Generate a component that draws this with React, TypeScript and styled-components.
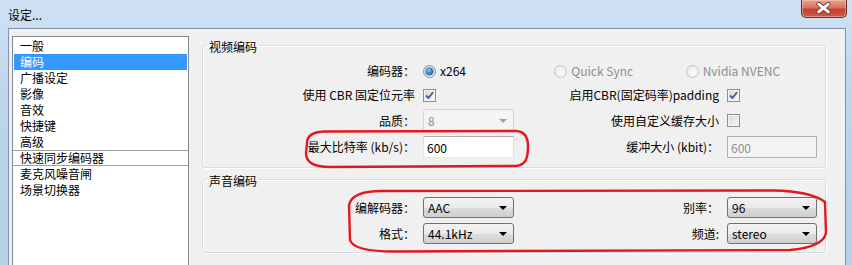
import styled, { createGlobalStyle } from 'styled-components';

const GlobalStyle = createGlobalStyle`
  html, body {
    margin: 0;
    padding: 0;
    width: 852px;
    height: 265px;
    overflow: hidden;
  }
  body {
    font-family: "Liberation Sans Narrow", "Noto Sans CJK SC", "Liberation Sans", sans-serif;
    font-size: 12px;
    color: #000;
  }
`;

const menuItems = [
  '一般',
  '编码',
  '广播设定',
  '影像',
  '音效',
  '快捷键',
  '高级',
  '快速同步编码器',
  '麦克风噪音闸',
  '场景切换器',
];

function Check() {
  return (
    <svg width="9" height="9" viewBox="0 0 9 9">
      <path d="M1 4.5 L3.5 7 L8 1.2" fill="none" stroke="#3f5a9c" strokeWidth="1.8" />
    </svg>
  );
}

function App() {
  return (
    <Window>
      <GlobalStyle />
      <TitleBar>
        <Title>设定...</Title>
        <CloseButton>
          <svg width="46" height="18" viewBox="0 0 46 18">
            <path d="M18 5 L28 13 M28 5 L18 13" stroke="#6b3a32" strokeWidth="4.6" strokeLinecap="round" />
            <path d="M18 5 L28 13 M28 5 L18 13" stroke="#fff" strokeWidth="2.8" strokeLinecap="round" />
          </svg>
        </CloseButton>
      </TitleBar>

      <Client>
        <MenuList>
          {menuItems.map((item, i) => (
            <MenuItem key={item} $selected={i === 1} $divided={i === 7}>
              {item}
            </MenuItem>
          ))}
        </MenuList>

        <Content>
          <GroupBox>
            <Legend>视频编码</Legend>
            <FormGrid $top={7} $rows="20px 20px 23px 22px" $gap={4}>
              <Label>编码器：</Label>
              <RadioGroup>
                <RadioOption>
                  <Radio $checked />
                  x264
                </RadioOption>
                <RadioOption $disabled>
                  <Radio $disabled />
                  Quick Sync
                </RadioOption>
                <RadioOption $disabled>
                  <Radio $disabled />
                  Nvidia NVENC
                </RadioOption>
              </RadioGroup>

              <Label>使用 CBR 固定位元率</Label>
              <Checkbox>
                <Check />
              </Checkbox>
              <Label>启用CBR(固定码率)padding</Label>
              <Checkbox>
                <Check />
              </Checkbox>

              <Label>品质：</Label>
              <Combo $disabled>
                8
                <Arrow $disabled />
              </Combo>
              <Label>使用自定义缓存大小</Label>
              <Checkbox />

              <Label>最大比特率 (kb/s)：</Label>
              <TextBox defaultValue="600" />
              <Label>缓冲大小 (kbit)：</Label>
              <TextBox defaultValue="600" disabled />
            </FormGrid>
          </GroupBox>

          <GroupBox>
            <Legend>声音编码</Legend>
            <FormGrid $top={9} $rows="21px 21px" $gap={5}>
              <Label>编解码器：</Label>
              <Combo>
                AAC
                <Arrow />
              </Combo>
              <Label>别率：</Label>
              <Combo>
                96
                <Arrow />
              </Combo>

              <Label>格式：</Label>
              <Combo>
                44.1kHz
                <Arrow />
              </Combo>
              <Label>频道:</Label>
              <Combo>
                stereo
                <Arrow />
              </Combo>
            </FormGrid>
          </GroupBox>
        </Content>
      </Client>

      <Annotation $left={300} $top={126} width="232" height="46" viewBox="0 0 232 46">
        <path d="M7 17 C7 9, 13 6, 24 5.5 L216 5 C225 5.5, 228 11, 228 20 C228 32, 226 39, 216 40 L30 41 C13 41, 6 36, 6 27 Z" />
      </Annotation>
      <Annotation $left={340} $top={185} width="492" height="73" viewBox="0 0 492 73">
        <path d="M9 20 C11 11, 22 6, 42 6 L433 5.5 C460 6, 476 10, 485 17 L486 48 C484 58, 472 63, 450 65 L55 66.5 C25 66.5, 12 62, 10 55 Z" />
      </Annotation>
    </Window>
  );
}

const Window = styled.div`
  position: relative;
  width: 852px;
  height: 265px;
  display: flex;
  flex-direction: column;
  background: linear-gradient(to bottom, #cfe1f4 0%, #bdd4ed 40%, #b7cfe9 100%);
  overflow: hidden;
`;

const TitleBar = styled.div`
  height: 28px;
  flex-shrink: 0;
  display: flex;
  align-items: flex-start;
  padding-left: 8px;
`;

const Title = styled.span`
  margin-top: 8px;
  line-height: 14px;
  font-size: 12px;
  color: #000;
`;

const CloseButton = styled.div`
  margin-left: auto;
  margin-right: 5px;
  width: 46px;
  height: 18px;
  box-sizing: border-box;
  border: 1px solid #6a2e26;
  border-top: none;
  border-radius: 0 0 5px 5px;
  background: linear-gradient(to bottom, #e8a595 0%, #d9735f 45%, #c2412d 55%, #cf5b45 100%);
  box-shadow: inset 0 0 0 1px rgba(255, 210, 200, 0.45);
  display: flex;
  svg {
    display: block;
    margin: -1px 0 0 -1px;
  }
`;

const Client = styled.div`
  flex: 1;
  min-height: 0;
  display: flex;
  align-items: flex-start;
  gap: 13px;
  margin: 0 6px 0 8px;
  padding: 7px 0 0 3px;
  background: #f0f0f0;
  border: 1px solid #7f92a8;
  border-bottom: none;
`;

const MenuList = styled.div`
  width: 177px;
  height: 260px;
  flex-shrink: 0;
  box-sizing: border-box;
  border: 1px solid #828790;
  background: #fff;
  padding: 1px 0;
`;

const MenuItem = styled.div<{ $selected?: boolean; $divided?: boolean }>`
  height: 16px;
  box-sizing: border-box;
  line-height: ${(p) => (p.$divided ? '14px' : '16px')};
  margin: ${(p) => (p.$divided ? '0' : '0 1px')};
  padding-left: ${(p) => (p.$divided ? '7px' : '6px')};
  white-space: nowrap;
  background: ${(p) => (p.$selected ? '#3399ff' : 'transparent')};
  color: ${(p) => (p.$selected ? '#fff' : '#000')};
  border-top: ${(p) => (p.$divided ? '1px solid #a0a0a0' : 'none')};
  border-bottom: ${(p) => (p.$divided ? '1px solid #a0a0a0' : 'none')};
`;

const Content = styled.div`
  width: 624px;
  display: flex;
  flex-direction: column;
  gap: 2px;
`;

const GroupBox = styled.fieldset`
  margin: 0;
  padding: 0 8px 9px 0;
  min-width: 0;
  border: 1px solid #d5dfe5;
  border-radius: 3px;
  box-shadow: inset 1px 1px 0 #fff, 1px 1px 0 #fff;
  & + & {
    padding-bottom: 8px;
  }
`;

const Legend = styled.legend`
  margin-left: 4px;
  padding: 4px 2px 0;
  line-height: 14px;
  font-size: 12px;
  color: #000;
`;

const FormGrid = styled.div<{ $top: number; $rows: string; $gap: number }>`
  display: grid;
  grid-template-columns: 212px 91px 1fr 90px;
  grid-template-rows: ${(p) => p.$rows};
  column-gap: 8px;
  row-gap: ${(p) => p.$gap}px;
  margin-top: ${(p) => p.$top}px;
  align-items: center;
`;

const Label = styled.span`
  justify-self: end;
  white-space: nowrap;
  line-height: 16px;
`;

const RadioGroup = styled.div`
  grid-column: 2 / 5;
  display: flex;
  align-items: center;
`;

const RadioOption = styled.span<{ $disabled?: boolean }>`
  width: 132px;
  display: inline-flex;
  align-items: center;
  gap: 4px;
  line-height: 16px;
  color: ${(p) => (p.$disabled ? '#8e8e8e' : '#000')};
`;

const Radio = styled.span<{ $checked?: boolean; $disabled?: boolean }>`
  position: relative;
  width: 13px;
  height: 13px;
  box-sizing: border-box;
  border-radius: 50%;
  border: 1px solid ${(p) => (p.$disabled ? '#c4c4c4' : '#8f8f8f')};
  background: ${(p) =>
    p.$disabled
      ? 'radial-gradient(circle at 60% 60%, #fafafa, #e6e6e6)'
      : 'radial-gradient(circle at 60% 60%, #ffffff, #d2d6db)'};
  &::after {
    content: '';
    display: ${(p) => (p.$checked ? 'block' : 'none')};
    position: absolute;
    left: 2px;
    top: 2px;
    width: 7px;
    height: 7px;
    border-radius: 50%;
    background: radial-gradient(circle at 40% 35%, #8fd0f5 0%, #2c8ad0 45%, #1c4f86 100%);
    box-shadow: 0 0 0 0.5px #24456b;
  }
`;

const Checkbox = styled.span`
  justify-self: start;
  width: 13px;
  height: 13px;
  box-sizing: border-box;
  border: 1px solid #8e8f8f;
  background: linear-gradient(135deg, #d3d7dc 0%, #f7f7f7 100%);
  box-shadow: inset 0 0 0 1px #f4f4f4;
  display: flex;
  align-items: center;
  justify-content: center;
  svg {
    display: block;
  }
`;

const Combo = styled.div<{ $disabled?: boolean }>`
  height: 100%;
  box-sizing: border-box;
  display: flex;
  align-items: center;
  padding-left: 4px;
  border-radius: 3px;
  border: 1px solid ${(p) => (p.$disabled ? '#d3d3d3' : '#707070')};
  background: ${(p) =>
    p.$disabled
      ? '#f4f4f4'
      : 'linear-gradient(to bottom, #f3f3f3 0%, #ebebeb 50%, #dddddd 51%, #cfcfcf 100%)'};
  color: ${(p) => (p.$disabled ? '#8e8e8e' : '#000')};
  line-height: 16px;
`;

const Arrow = styled.span<{ $disabled?: boolean }>`
  margin-left: auto;
  margin-right: 6px;
  width: 0;
  height: 0;
  border-left: 4px solid transparent;
  border-right: 4px solid transparent;
  border-top: 4px solid ${(p) => (p.$disabled ? '#a2a2a2' : '#000')};
`;

const TextBox = styled.input`
  height: 100%;
  width: 100%;
  box-sizing: border-box;
  margin: 0;
  padding: 0 0 0 3px;
  font: inherit;
  line-height: 16px;
  color: #000;
  background: #fff;
  border: 1px solid;
  border-color: #abadb3 #dbdfe6 #e3e9ef #e2e3ea;
  outline: none;
  &:disabled {
    color: #8e8e8e;
    background: #f4f4f4;
    border-color: #adb2b5;
  }
`;

const Annotation = styled.svg<{ $left: number; $top: number }>`
  position: absolute;
  left: ${(p) => p.$left}px;
  top: ${(p) => p.$top}px;
  pointer-events: none;
  path {
    fill: none;
    stroke: #e5161f;
    stroke-width: 2.4;
    stroke-linejoin: round;
  }
`;

export default App;
